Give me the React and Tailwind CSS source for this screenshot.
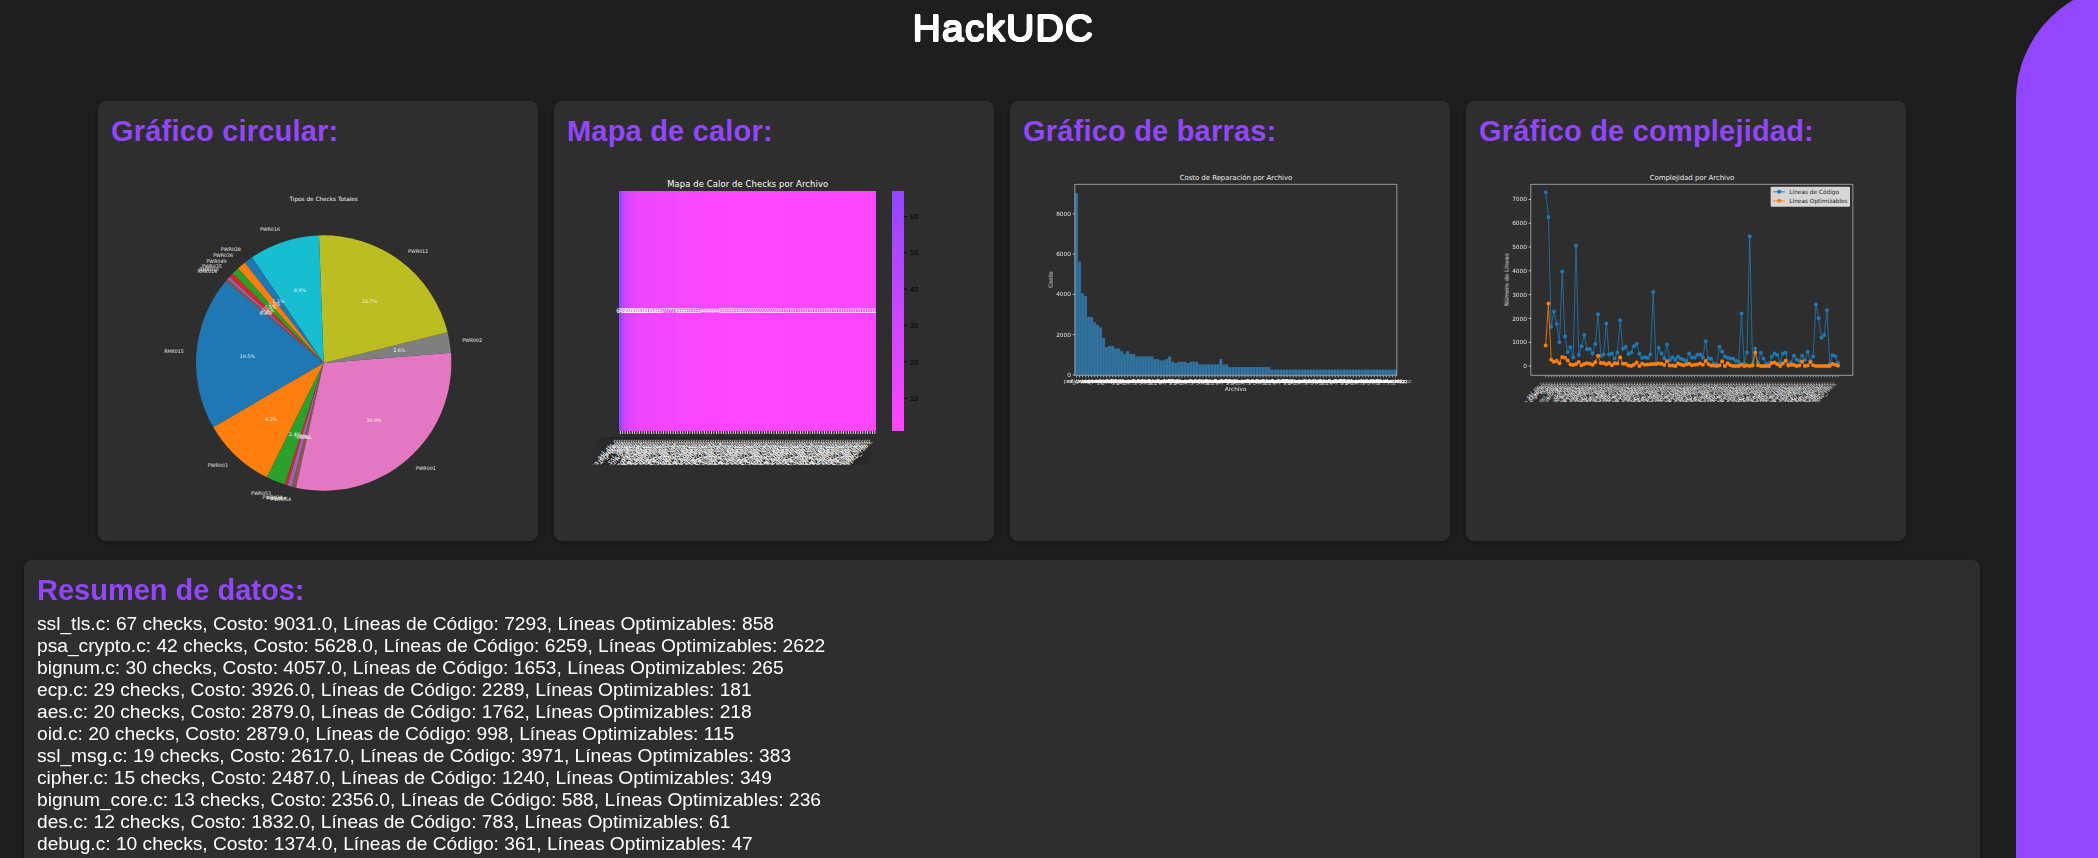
import React from 'react';

const COLORS = ['#1f77b4', '#ff7f0e', '#2ca02c', '#d62728', '#9467bd', '#8c564b', '#e377c2', '#7f7f7f', '#bcbd22', '#17becf'];

const FILES = ['ssl_tls.c', 'psa_crypto.c', 'bignum.c', 'ecp.c', 'aes.c', 'oid.c', 'ssl_msg.c', 'cipher.c', 'bignum_core.c', 'des.c', 'debug.c',
  'x509_crt_parse.c', 'psa_crypto_rsa.c', 'ssl_tls12_client.c', 'ssl_tls13_generic.c', 'pkparse_helpers.c', 'ssl_ciphersuites.c', 'test_camellia.c', 'ssl_client_hello.c', 'ssl_tls12_server.c',
  'entropy_poll.c', 'x509_create.c', 'ssl_tls13_server.c', 'gcm_selftest.c', 'psa_crypto_aria.c', 'cipher_wrap_ccm.c', 'ssl_tls13_keys.c', 'ssl_tls13_client.c', 'sha512_update.c', 'x509write_crt.c'];
const names = Array.from({ length: 107 }, (_, i) => FILES[i < 11 ? i : 11 + ((i * 7) % 19)]);

const rep = (v, n) => Array(n).fill(v);
const COSTS = [9031, 5628, 4057, 3926, 2879, 2879, 2617, 2487, 2356, 1832, 1374, 1440, 1440, 1310, 1310, 1178, 1047, 1178, 1047, 1047,
  ...rep(916, 6), 785, 785, 720, 720, 785, 916, 654, 589, 654, 654, 654, 589, 654, 654, 654, ...rep(523, 7), 785, 523, 523, ...rep(393, 14), ...rep(262, 42)];
const CHECKS = [67, 42, 30, 29, 20, 20, 19, 15, 13, 12, 10, 10, 10, 9, 9, 8, 8, 8, 7, 7, 7, 7, 7, 7, 6, 6, 6, 6, 6, 5, 5, 5, 5, 5,
  ...rep(4, 8), ...rep(3, 10), ...rep(2, 14), ...rep(1, 41)];
const CODE = [7293, 6259, 1653, 2289, 1762, 998, 3971, 1240, 588, 783, 361, 5050, 460, 830, 1300, 700, 715, 530, 920, 2170, 420, 480, 1790, 480, 520,
  310, 570, 1920, 720, 810, 500, 570, 830, 930, 510, 340, 370, 340, 480, 3110, 80, 770, 530, 320, 900, 250, 360, 260, 390, 300, 260, 210, 530, 360, 360,
  470, 480, 360, 1040, 320, 300, 100, 60, 810, 610, 400, 350, 320, 300, 220, 170, 2210, 130, 570, 5450, 80, 740, 150, 560, 310, 80, 100, 400, 520, 460,
  130, 530, 560, 60, 150, 430, 270, 210, 430, 250, 600, 200, 400, 2580, 2010, 1190, 1300, 2340, 80, 450, 410, 130];
const OPT = [858, 2622, 265, 181, 218, 115, 383, 349, 236, 61, 47, 80, 170, 30, 80, 120, 90, 50, 160, 430, 130, 130, 70, 130, 30, 120, 110, 370, 90, 90,
  20, 0, 50, 150, 0, 90, 50, 60, 70, 80, 80, 110, 90, 40, 200, 20, 20, 0, 100, 60, 30, 70, 90, 30, 50, 60, 100, 50, 210, 80, 20, 20, 0, 20, 200, 0, 120,
  30, 0, 0, 0, 50, 0, 20, 0, 20, 570, 30, 0, 0, 0, 0, 130, 150, 70, 0, 100, 220, 20, 50, 40, 0, 20, 190, 0, 20, 170, 30, 0, 0, 0, 0, 0, 0, 80, 50, 10];

const CHART = "block h-[376px] w-full font-['DejaVu_Sans',sans-serif]";

const SLICES = [
  [140, 210.2, 0, 'RMK015', '19.5%'], [210.2, 243.6, 1, 'PWR003', '9.3%'], [243.6, 252.3, 2, 'PWR053', '2.4%'],
  [252.3, 253.6, 3, 'PWR034', '0.4%'], [253.6, 255.6, 4, 'PWR004', '0.5%'], [255.6, 257.5, 5, 'PWR054', '0.5%'],
  [257.5, 364.6, 6, 'PWR001', '29.9%'], [4.6, 13.9, 7, 'PWR002', '2.6%'], [13.9, 92.1, 8, 'PWR012', '21.7%'],
  [92.1, 124.2, 9, 'PWR016', '8.9%'], [124.2, 128.2, 0, 'PWR028', '1.1%'], [128.2, 132.2, 1, 'PWR036', '1.1%'],
  [132.2, 135.5, 2, 'PWR049', '0.9%'], [135.5, 137.7, 3, 'PWR035', '0.6%'], [137.7, 138.9, 4, 'RMK010', '0.3%'], [138.9, 140, 5, 'RMK014', '0.4%'],
];
const polar = (deg, r) => [731 + r * Math.cos((deg * Math.PI) / 180), 819 - r * Math.sin((deg * Math.PI) / 180)];

function PieChart() {
  return (
    <svg viewBox="54 225 1320 1128" className={CHART}>
      <text x="731" y="332" fontSize="17.2" fill="#fff" opacity="0.95" textAnchor="middle" textLength="205">Tipos de Checks Totales</text>
      {SLICES.map(([a, b, c], i) => {
        const [x1, y1] = polar(a, 383);
        const [x2, y2] = polar(b, 383);
        return <path key={i} d={`M731 819L${x1} ${y1}A383 383 0 0 0 ${x2} ${y2}Z`} fill={COLORS[c]} />;
      })}
      {SLICES.map(([a, b, , label, pct], i) => {
        const mid = (a + b) / 2;
        const [lx, ly] = polar(mid, 421);
        const [px, py] = polar(mid, 230);
        return (
          <g key={i} fill="#fff" fontSize="14.3" opacity="0.9">
            <text x={lx} y={ly + 5} textAnchor={lx > 731 ? 'start' : 'end'}>{label}</text>
            <text x={px} y={py + 5} textAnchor="middle">{pct}</text>
          </g>
        );
      })}
    </svg>
  );
}

const heat = (v) => {
  const t = (v - 1) / 66;
  return `rgb(${Math.round(255 - t * 109)},70,255)`;
};

function HeatMap() {
  const w = 771 / 107;
  return (
    <svg viewBox="42 225 1320 1128" className={CHART}>
      <defs>
        <linearGradient id="scale" x1="0" y1="0" x2="0" y2="1">
          <stop offset="0" stopColor="rgb(146,70,255)" />
          <stop offset="1" stopColor="rgb(255,70,255)" />
        </linearGradient>
        <clipPath id="heatClip"><rect x="42" y="1020" width="1100" height="104" /></clipPath>
      </defs>
      <text x="623" y="290" fontSize="25.2" fill="#fff" textAnchor="middle" textLength="483">Mapa de Calor de Checks por Archivo</text>
      {CHECKS.map((v, i) => <rect key={i} x={237 + i * w} y="303" width={771 - i * w} height="720" fill={heat(v)} />)}
      <rect x="1056" y="303" width="36" height="720" fill="url(#scale)" />
      {[60, 50, 40, 30, 20, 10].map((v) => {
        const y = 1023 - ((v - 1) / 66) * 720;
        return (
          <g key={v}>
            <rect x="1092" y={y - 1.5} width="9" height="2.5" fill="#000" />
            <text x="1109" y={y + 8} fontSize="20.5" fill="#000">{v}</text>
          </g>
        );
      })}
      <g fill="#fff" fontSize="19" textAnchor="middle">
        {CHECKS.map((v, i) => <text key={i} x={237 + (i + 0.5) * w} y="668">{v}</text>)}
      </g>
      <g fill="#fff" fontSize="20" clipPath="url(#heatClip)">
        {names.map((n, i) => {
          const x = 237 + (i + 0.5) * w;
          return (
            <g key={i}>
              <rect x={x - 1} y="1023" width="2.4" height="9" />
              <text x={x - 6} y="1056" textAnchor="end" opacity="0.92" transform={`rotate(-45 ${x - 6} 1056)`}>{n}</text>
            </g>
          );
        })}
      </g>
    </svg>
  );
}

function BarChart() {
  const w = 965 / 107;
  return (
    <svg viewBox="30 225 1320 1128" className={CHART}>
      <text x="708" y="271" fontSize="21" fill="#fff" opacity="0.9" textAnchor="middle" textLength="338">Costo de Reparación por Archivo</text>
      {COSTS.map((v, i) => <rect key={i} x={225.5 + i * w} y={855 - v * 0.0604} width={w * 0.84} height={v * 0.0604} fill="#3274a1" />)}
      {COSTS.map((v, i) => <rect key={i} x={225.5 + i * w} y={855 - v * 0.0604} width={w} height={v * 0.0604} fill="#3274a1" opacity="0.6" />)}
      <rect x="224.5" y="283" width="966" height="573" fill="none" stroke="#fff" strokeOpacity="0.5" strokeWidth="3" />
      <g fill="#fff" fontSize="17.5" opacity="0.85">
        {[0, 2000, 4000, 6000, 8000].map((v) => (
          <g key={v}>
            <rect x="218" y={853.5 - v * 0.0604} width="6" height="2.5" />
            <text x="213" y={861 - v * 0.0604} textAnchor="end">{v}</text>
          </g>
        ))}
        <text x="707" y="903" textAnchor="middle">Archivo</text>
        <text x="158" y="569" textAnchor="middle" transform="rotate(-90 158 569)">Costo</text>
      </g>
      <g fill="#fff" fontSize="15.5" textAnchor="middle">
        {names.map((n, i) => {
          const x = 230 + i * w;
          return (
            <g key={i} opacity="0.75">
              <rect x={x - 1.2} y="857" width="2.4" height="5" />
              <text x={x} y="880">{i > 103 ? 'hmac_drbg.c' : n}</text>
            </g>
          );
        })}
      </g>
    </svg>
  );
}

function Series({ data, color }) {
  const pts = data.map((v, i) => [287 + i * 8.274, 828 - v * 0.07143]);
  return (
    <g>
      <polyline points={pts.map((p) => p.join(',')).join(' ')} fill="none" stroke={color} strokeWidth="2.8" strokeLinejoin="round" opacity="0.9" />
      {pts.map(([x, y], i) => <circle key={i} cx={x} cy={y} r="6" fill={color} />)}
    </g>
  );
}

function LineChart() {
  return (
    <svg viewBox="48 225 1320 1128" className={CHART}>
      <defs><clipPath id="lineClip"><rect x="48" y="850" width="1300" height="86" /></clipPath></defs>
      <text x="726" y="271" fontSize="21" fill="#fff" opacity="0.9" textAnchor="middle" textLength="254">Complejidad por Archivo</text>
      <Series data={CODE} color="#1f77b4" />
      <Series data={OPT} color="#ff7f0e" />
      <rect x="242.5" y="283" width="966" height="573" fill="none" stroke="#fff" strokeOpacity="0.5" strokeWidth="3" />
      <g fill="#fff" fontSize="17.5" opacity="0.85">
        {[0, 1000, 2000, 3000, 4000, 5000, 6000, 7000].map((v) => (
          <g key={v}>
            <rect x="236" y={827 - v * 0.07143} width="6" height="2.5" />
            <text x="231" y={834.5 - v * 0.07143} textAnchor="end">{v}</text>
          </g>
        ))}
        <text x="176" y="569" textAnchor="middle" transform="rotate(-90 176 569)">Número de Líneas</text>
      </g>
      <rect x="962" y="290" width="238" height="60" rx="3" fill="#d6d6d6" />
      <g fontSize="17.5" fill="#222">
        <path d="M969 305.500H1005" stroke="#1f77b4" strokeWidth="2.6" />
        <circle cx="987.500" cy="305.500" r="6" fill="#1f77b4" />
        <text x="1018" y="311" textLength="149">Líneas de Código</text>
        <path d="M969 332.500H1005" stroke="#ff7f0e" strokeWidth="2.6" />
        <circle cx="987.500" cy="332.500" r="6" fill="#ff7f0e" />
        <text x="1018" y="338" textLength="175">Líneas Optimizables</text>
      </g>
      <g fill="#fff" fontSize="17" clipPath="url(#lineClip)">
        {names.map((n, i) => {
          const x = 287 + i * 8.274;
          return (
            <g key={i}>
              <rect x={x - 1.2} y="857" width="2.4" height="5" opacity="0.6" />
              <text x={x - 5} y="882" textAnchor="end" opacity="0.8" transform={`rotate(-45 ${x - 5} 882)`}>{n}</text>
            </g>
          );
        })}
      </g>
    </svg>
  );
}

const SUMMARY = [
  ['ssl_tls.c', 67, '9031.0', 7293, 858],
  ['psa_crypto.c', 42, '5628.0', 6259, 2622],
  ['bignum.c', 30, '4057.0', 1653, 265],
  ['ecp.c', 29, '3926.0', 2289, 181],
  ['aes.c', 20, '2879.0', 1762, 218],
  ['oid.c', 20, '2879.0', 998, 115],
  ['ssl_msg.c', 19, '2617.0', 3971, 383],
  ['cipher.c', 15, '2487.0', 1240, 349],
  ['bignum_core.c', 13, '2356.0', 588, 236],
  ['des.c', 12, '1832.0', 783, 61],
  ['debug.c', 10, '1374.0', 361, 47],
];

const HEADING = 'leading-[34px] font-bold text-[#9346ff]';

function Card({ title, children }) {
  return (
    <section className="flex h-[440px] w-[440px] flex-col overflow-hidden rounded-lg bg-[#2e2e2e] shadow-[0_2px_4px_rgba(0,0,0,0.3)]">
      <h2 className={`${HEADING} h-16 shrink-0 px-[13px] pt-[13px] text-[29px] tracking-[0.2px]`}>{title}</h2>
      {children}
    </section>
  );
}

export default function App() {
  return (
    <div className="flex h-[858px] overflow-hidden bg-[#1e1e1e] font-['Liberation_Sans',Arial,sans-serif] text-white">
      <main className="flex w-[2016px] shrink-0 flex-col pl-6">
        <h1 className="h-[101px] w-[1956px] shrink-0 pt-[7px] pl-[2px] text-center text-[37px] leading-[44px] font-normal tracking-[1.2px]">
          <span className="inline-block scale-x-105 [text-shadow:0.9px_0_0_#fff,-0.9px_0_0_#fff,0_0.9px_0_#fff,0_-0.9px_0_#fff,0.6px_0.6px_0_#fff,-0.6px_0.6px_0_#fff,0.6px_-0.6px_0_#fff,-0.6px_-0.6px_0_#fff]">HackUDC</span>
        </h1>
        <div className="flex w-[1956px] shrink-0 justify-center gap-4">
          <Card title="Gráfico circular:"><PieChart /></Card>
          <Card title="Mapa de calor:"><HeatMap /></Card>
          <Card title="Gráfico de barras:"><BarChart /></Card>
          <Card title="Gráfico de complejidad:"><LineChart /></Card>
        </div>
        <section className="mt-[19px] h-[400px] w-[1956px] shrink-0 rounded-lg bg-[#2e2e2e] px-[13px] pt-[13px] shadow-[0_2px_4px_rgba(0,0,0,0.3)]">
          <h2 className={`${HEADING} mb-[6px] text-[29px]`}>Resumen de datos:</h2>
          {SUMMARY.map(([file, checks, cost, lines, opt]) => (
            <p key={file} className="text-[19.2px] leading-[22px]">
              {`${file}: ${checks} checks, Costo: ${cost}, Líneas de Código: ${lines}, Líneas Optimizables: ${opt}`}
            </p>
          ))}
        </section>
      </main>
      <aside className="-mt-4 h-[900px] w-[200px] shrink-0 rounded-tl-[116px] bg-[#9346ff]" />
    </div>
  );
}
